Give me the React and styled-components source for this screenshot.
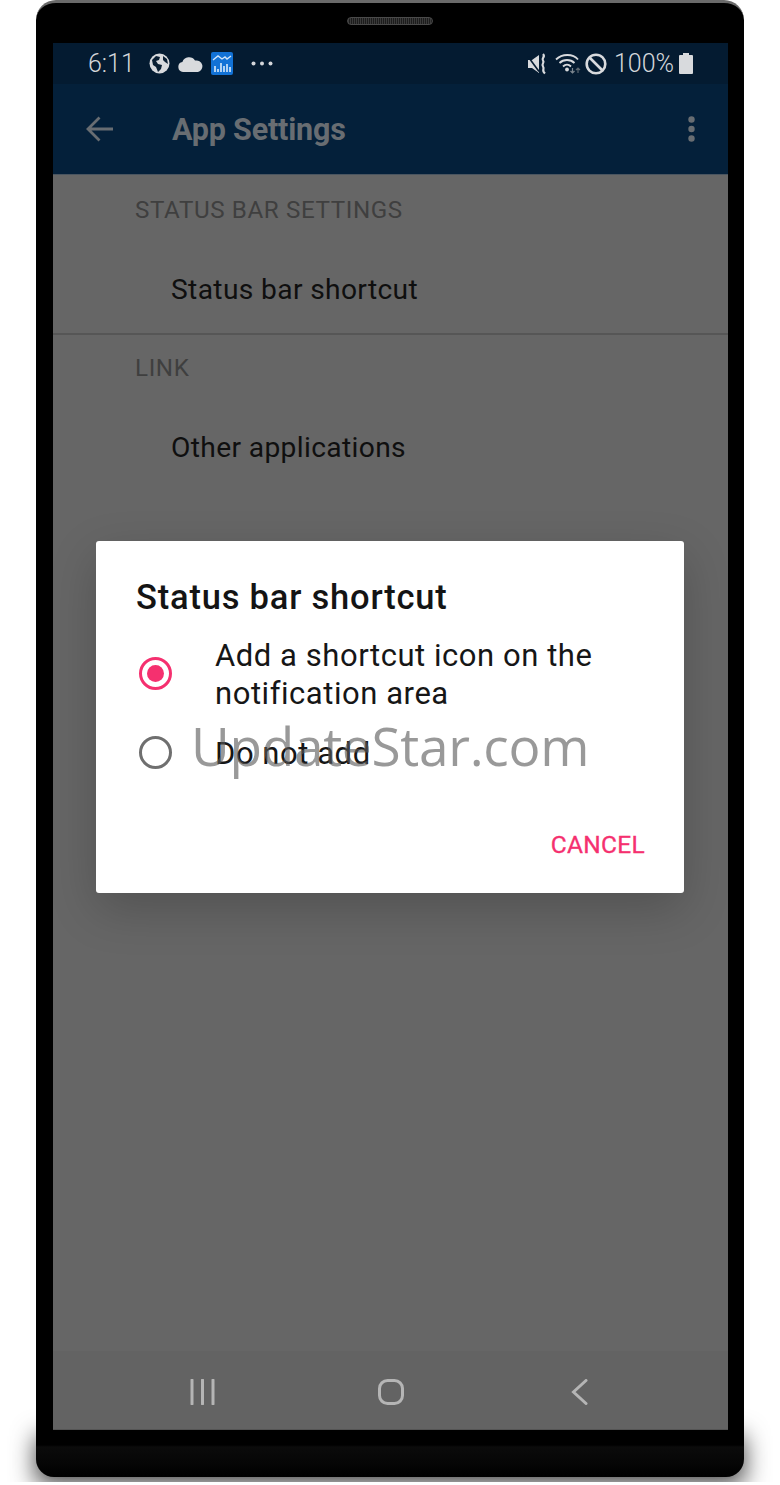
import React from "react";
import styled, { createGlobalStyle } from "styled-components";

const Global = createGlobalStyle`
  html, body {
    margin: 0;
    padding: 0;
    background: #ffffff;
  }
  body {
    font-family: Roboto, "Liberation Sans", sans-serif;
  }
`;

const Page = styled.div`
  position: relative;
  width: 780px;
  height: 1485px;
  overflow: hidden;
  background: #ffffff;
  padding: 0 36px;
  box-sizing: border-box;
`;

const FloorShadow = styled.div`
  position: absolute;
  left: 46px;
  right: 46px;
  top: 1446px;
  height: 28px;
  background: #000;
  box-shadow: 0 0 24px 10px rgba(0, 0, 0, 0.75);
  clip-path: inset(-40px -40px -8px -40px);
`;

const Phone = styled.div`
  position: relative;
  width: 708px;
  height: 1477px;
  box-sizing: border-box;
  background: linear-gradient(#000 0, #000 1442px, #0b0b0b 1444px, #060606 1460px, #000 1474px);
  border-top: 3px solid #6a6a6a;
  border-radius: 20px 20px 18px 18px;
  padding: 40px 16px 0 17px;
`;

const Speaker = styled.div`
  position: absolute;
  top: 14px;
  left: 311px;
  width: 86px;
  height: 8px;
  box-sizing: border-box;
  border-radius: 4px;
  background: repeating-linear-gradient(90deg, #3a3a3a 0 1px, #1c1c1c 1px 2px);
  border: 1px solid #4a4a4a;
`;

const Screen = styled.div`
  position: relative;
  height: 1387px;
  display: flex;
  flex-direction: column;
  background: #666666;
  border-bottom: 1px solid #555;
  box-sizing: border-box;
`;

const StatusBar = styled.div`
  height: 41px;
  flex: none;
  display: flex;
  align-items: center;
  justify-content: space-between;
  padding: 0 35px 0 35px;
  background: #041b31;
  color: #d4d6da;
`;

const StatusGroup = styled.div`
  display: flex;
  align-items: center;
  gap: ${(p) => p.$gap}px;
`;

const Clock = styled.span`
  font-size: 25px;
  font-weight: 300;
  margin-right: 6px;
`;

const Percent = styled.span`
  font-size: 25px;
  font-weight: 300;
  margin: 0 1px 0 3px;
`;

const StatusSpacer = styled.span`
  width: 2px;
`;

const AppBar = styled.div`
  height: 91px;
  flex: none;
  display: flex;
  align-items: center;
  background: #04203a;
  border-bottom: 1px solid #4a5560;
  box-sizing: border-box;
  padding: 0 33px 0 33px;
`;

const AppTitle = styled.div`
  flex: 1;
  margin-left: 58px;
  font-size: 30.5px;
  font-weight: 700;
  letter-spacing: -0.2px;
  color: #686d72;
`;

const SectionLabel = styled.div`
  padding-left: 82px;
  height: ${(p) => p.$height}px;
  display: flex;
  align-items: center;
  font-size: 24.2px;
  letter-spacing: 0.6px;
  color: #3f3f3f;
`;

const Row = styled.div`
  padding-left: 118px;
  height: ${(p) => p.$height}px;
  display: flex;
  align-items: center;
  font-size: 28.2px;
  letter-spacing: 0.35px;
  color: #0f0f0f;
  box-sizing: border-box;
  border-bottom: ${(p) => (p.$divider ? "2px solid #565656" : "none")};
`;

const NavBar = styled.div`
  margin-top: auto;
  height: 78px;
  flex: none;
  display: flex;
  align-items: center;
  padding: 4px 0 0 137px;
  box-sizing: border-box;
  gap: 163px;
  background: #636363;
`;

const NavBackSlot = styled.div`
  display: flex;
  margin-left: 4px;
`;

const Overlay = styled.div`
  position: absolute;
  inset: 0;
  padding: 498px 44px 0 43px;
`;

const Dialog = styled.div`
  height: 352px;
  box-sizing: border-box;
  background: #ffffff;
  border-radius: 3px;
  box-shadow: 0 16px 48px rgba(0, 0, 0, 0.2);
  padding: 36px 40px 0;
  display: flex;
  flex-direction: column;
`;

const DialogTitle = styled.div`
  font-size: 34.5px;
  font-weight: 500;
  line-height: 40px;
  letter-spacing: 0.8px;
  color: #141414;
`;

const Option = styled.div`
  display: flex;
  align-items: center;
  gap: 43px;
  padding-left: 3px;
  margin-top: ${(p) => p.$top}px;
`;

const Radio = styled.div`
  width: 33px;
  height: 33px;
  flex: none;
  box-sizing: border-box;
  margin-bottom: 4px;
  border-radius: 50%;
  border: 3px solid ${(p) => (p.$checked ? "#f5306f" : "#6f6f6f")};
  display: flex;
  align-items: center;
  justify-content: center;
  &::after {
    content: "";
    width: 17px;
    height: 17px;
    border-radius: 50%;
    background: ${(p) => (p.$checked ? "#f5306f" : "transparent")};
  }
`;

const OptionText = styled.div`
  font-size: 31px;
  line-height: 38px;
  letter-spacing: 0.55px;
  color: #161616;
`;

const Actions = styled.div`
  margin-top: auto;
  padding-bottom: 34px;
  display: flex;
  justify-content: flex-end;
`;

const Cancel = styled.div`
  font-size: 24.5px;
  font-weight: 400;
  letter-spacing: 0.3px;
  margin-right: -1px;
  -webkit-text-stroke: 0.3px #f5306f;
  color: #f5306f;
`;

const Watermark = styled.div`
  position: absolute;
  left: 191px;
  top: 709px;
  font-family: "Open Sans", sans-serif;
  font-size: 53.2px;
  line-height: 74px;
  letter-spacing: -0.3px;
  color: rgba(90, 90, 90, 0.62);
  pointer-events: none;
`;

const Globe = () => (
  <svg width="21" height="21" viewBox="0 0 21 21">
    <circle cx="10.5" cy="10.5" r="10" fill="#d8dadd" />
    <path d="M3 7l4-4 4 1-1 3-3 1 2 3 4 1-1 4-3 3-2-5-3-2zM14 3l4 3 1 5-3-2-2-2z" fill="#0a1f33" />
  </svg>
);

const Cloud = () => (
  <svg width="25" height="16" viewBox="0 0 25 16">
    <path d="M5 16a5 5 0 0 1-.6-9.9A7 7 0 0 1 17 4.6 5.7 5.7 0 0 1 20 16z" fill="#d8dadd" />
  </svg>
);

const ChartBadge = () => (
  <svg width="22" height="23" viewBox="0 0 22 23">
    <rect width="22" height="23" rx="2" fill="#1272d6" />
    <path d="M2 8l5-4 4 3 3-2 2 2 4-3" stroke="#cfe4fa" strokeWidth="1.4" fill="none" />
    <path d="M4 20v-6M7 20v-3M10 20v-9M13 20v-6M16 20v-8M19 20v-5" stroke="#d8e9fb" strokeWidth="1.6" />
  </svg>
);

const Dots = () => (
  <svg width="22" height="5" viewBox="0 0 22 5">
    <circle cx="2.5" cy="2.5" r="2" fill="#d4d6da" />
    <circle cx="11" cy="2.5" r="2" fill="#d4d6da" />
    <circle cx="19.5" cy="2.5" r="2" fill="#d4d6da" />
  </svg>
);

const MuteVibrate = () => (
  <svg width="24" height="22" viewBox="0 0 24 22">
    <path d="M1 7h4l7-5v18l-7-5H1z" fill="#d8dadd" />
    <path d="M1 3.500l11 15" stroke="#041b31" strokeWidth="1.600" />
    <path d="M16 1c3 3-2 4 0 6.500s-2 3 0 6 -2 3.500 2 7" stroke="#d8dadd" strokeWidth="2.200" fill="none" />
  </svg>
);

const Wifi = () => (
  <svg width="26" height="21" viewBox="0 0 26 21">
    <path d="M1 6.500c6-6 17-6 22 0M4.500 10c4-4 11-4 15 0M8 13.500c2.500-2.500 5.500-2.500 8 0" stroke="#d8dadd" strokeWidth="1.800" fill="none" />
    <circle cx="12" cy="16.500" r="1.900" fill="#d8dadd" />
    <path d="M17.500 15v5M15.500 18l2 2 2-2" stroke="#7d868f" strokeWidth="1.200" fill="none" />
    <path d="M23 20v-5M21 17l2-2 2 2" stroke="#5c6770" strokeWidth="1.200" fill="none" />
  </svg>
);

const Blocked = () => (
  <svg width="22" height="22" viewBox="0 0 22 22">
    <circle cx="11" cy="11" r="9.300" stroke="#d8dadd" strokeWidth="2.600" fill="none" />
    <path d="M4.500 4.500l13 13" stroke="#d8dadd" strokeWidth="2.600" />
  </svg>
);

const Battery = () => (
  <svg width="14" height="21" viewBox="0 0 14 21">
    <path d="M4 0h6v2h3a1 1 0 0 1 1 1v17a1 1 0 0 1-1 1H1a1 1 0 0 1-1-1V3a1 1 0 0 1 1-1h3z" fill="#d8dadd" />
  </svg>
);

const BackArrow = () => (
  <svg width="28" height="26" viewBox="0 0 28 26">
    <path d="M27 13H2M13.500 1.500L2 13l11.500 11.500" stroke="#686d72" strokeWidth="2.800" fill="none" />
  </svg>
);

const MoreDots = () => (
  <svg width="7" height="26" viewBox="0 0 7 26">
    <circle cx="3.500" cy="3.500" r="3.200" fill="#686d72" />
    <circle cx="3.500" cy="13" r="3.200" fill="#686d72" />
    <circle cx="3.500" cy="22.500" r="3.200" fill="#686d72" />
  </svg>
);

const NavRecent = () => (
  <svg width="25" height="26" viewBox="0 0 25 26">
    <path d="M2 1v24M12.500 1v24M23 1v24" stroke="#b5b5b5" strokeWidth="3" strokeLinecap="round" />
  </svg>
);

const NavHome = () => (
  <svg width="26" height="26" viewBox="0 0 26 26">
    <rect x="1.500" y="1.500" width="23" height="23" rx="8" stroke="#b5b5b5" strokeWidth="3" fill="none" />
  </svg>
);

const NavBack = () => (
  <svg width="17" height="26" viewBox="0 0 17 26">
    <path d="M15 1.500L2.500 13 15 24.500" stroke="#b5b5b5" strokeWidth="3" strokeLinecap="round" fill="none" />
  </svg>
);

export default function App() {
  return (
    <Page>
      <Global />
      <FloorShadow />
      <Phone>
        <Speaker />
        <Screen>
          <StatusBar>
            <StatusGroup $gap={8}>
              <Clock>6:11</Clock>
              <Globe />
              <Cloud />
              <ChartBadge />
              <StatusSpacer />
              <Dots />
            </StatusGroup>
            <StatusGroup $gap={4}>
              <MuteVibrate />
              <Wifi />
              <Blocked />
              <Percent>100%</Percent>
              <Battery />
            </StatusGroup>
          </StatusBar>
          <AppBar>
            <BackArrow />
            <AppTitle>App Settings</AppTitle>
            <MoreDots />
          </AppBar>
          <SectionLabel $height={70}>STATUS BAR SETTINGS</SectionLabel>
          <Row $height={90} $divider>
            Status bar shortcut
          </Row>
          <SectionLabel $height={66}>LINK</SectionLabel>
          <Row $height={93}>Other applications</Row>
          <NavBar>
            <NavRecent />
            <NavHome />
            <NavBackSlot>
              <NavBack />
            </NavBackSlot>
          </NavBar>
          <Overlay>
            <Dialog>
              <DialogTitle>Status bar shortcut</DialogTitle>
              <Option $top={20}>
                <Radio $checked />
                <OptionText>
                  Add a shortcut icon on the
                  <br />
                  notification area
                </OptionText>
              </Option>
              <Option $top={22}>
                <Radio />
                <OptionText>Do not add</OptionText>
              </Option>
              <Actions>
                <Cancel>CANCEL</Cancel>
              </Actions>
            </Dialog>
          </Overlay>
        </Screen>
      </Phone>
      <Watermark>UpdateStar.com</Watermark>
    </Page>
  );
}
